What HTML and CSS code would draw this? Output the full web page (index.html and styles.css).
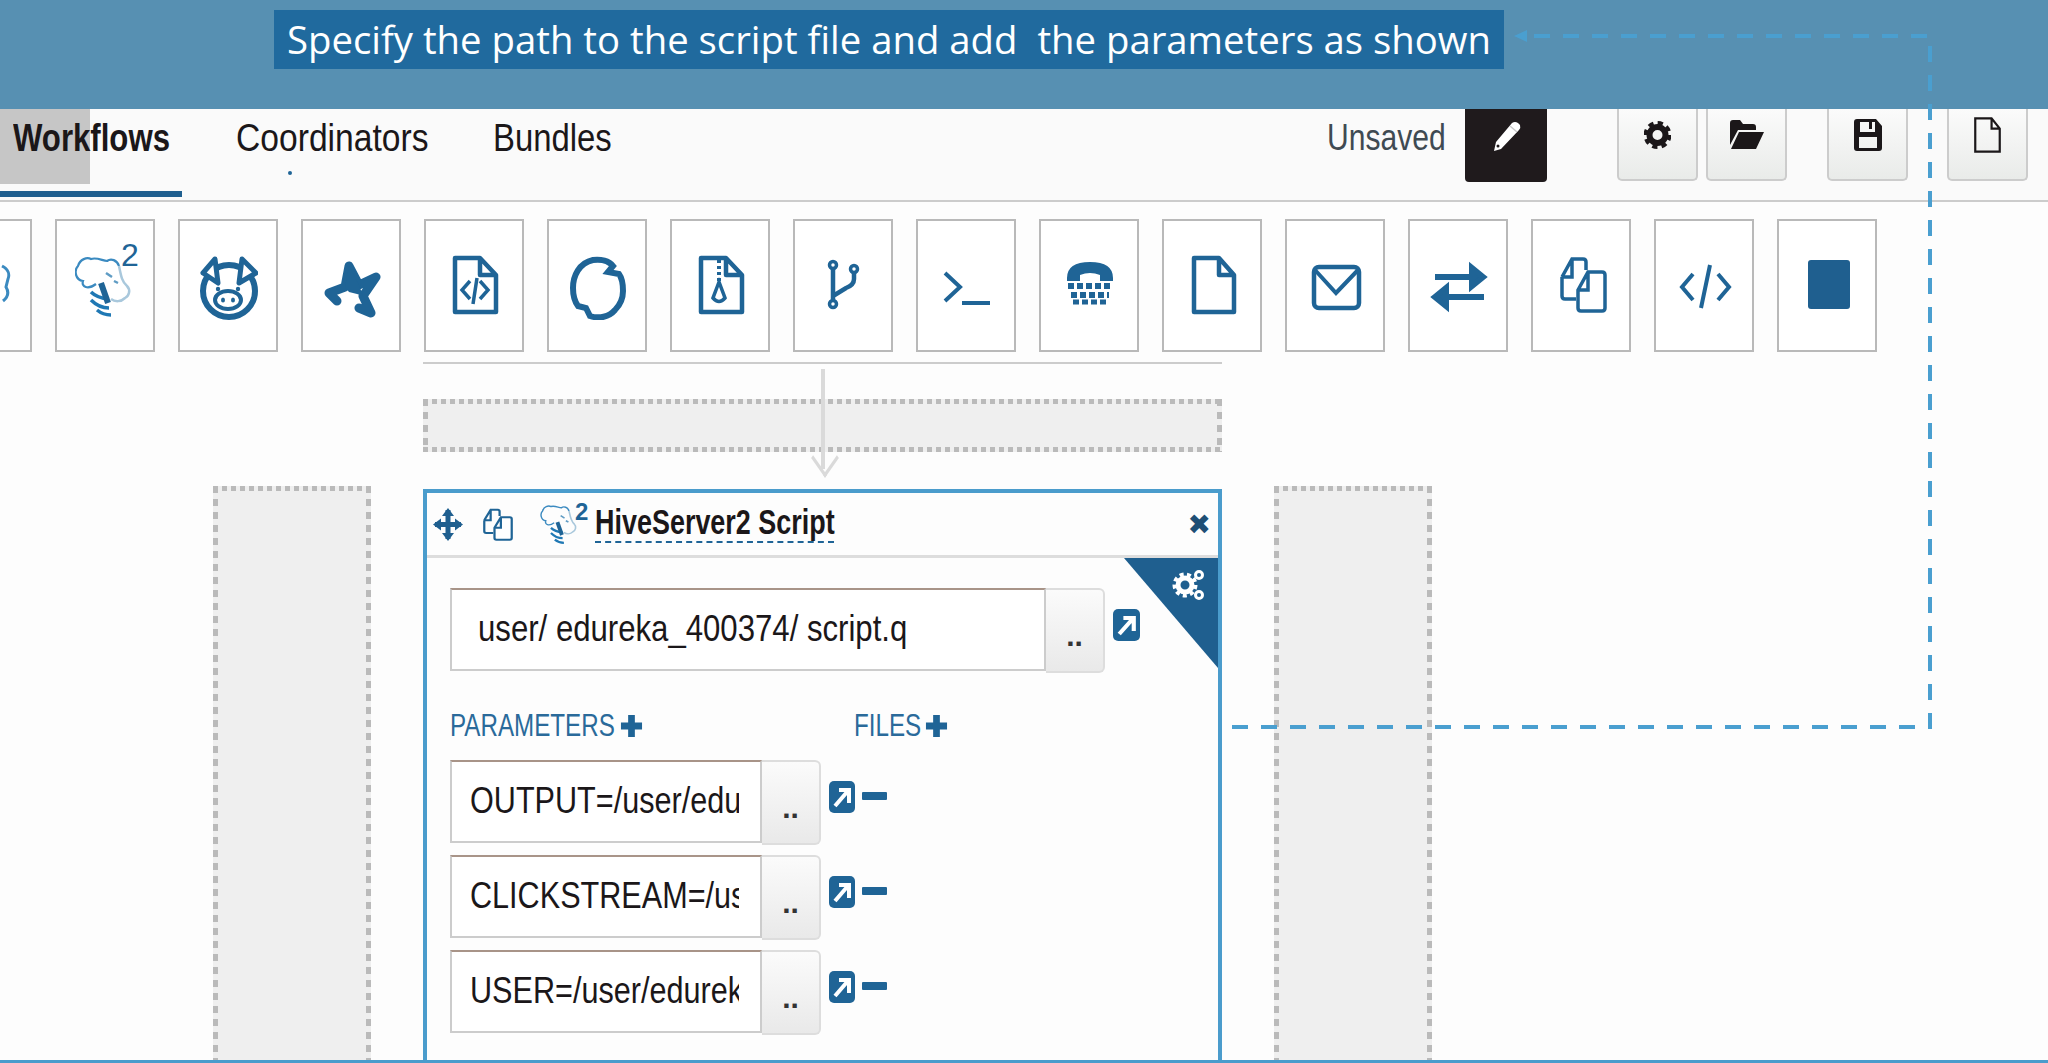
FILE: index.html
```html
<!DOCTYPE html>
<html lang="en">
<head>
    <meta charset="UTF-8">
    <title>Workflow Editor</title>
    <link rel="stylesheet" href="styles.css">
</head>
<body>
    <svg class="defs" width="0" height="0">
        <symbol id="hive" viewBox="0 0 60 68">
            <path d="M21 32C13 38 6 35 8 29 0 28-1 18 3 14 5 7 12 5 16 7 22 5 28 9 32 9 36 6 42 8 44 14" fill="none" stroke="#3b8ac0" stroke-width="2.200"/>
            <path d="M44 14C46 24 47 30 52 34 56 38 54 44 50 46 46 50 40 50 36 47" fill="none" stroke="#a9c8dc" stroke-width="2.500"/>
            <path d="M31 21l6 4M39 29l4 2" stroke="#5f9cc4" stroke-width="2.500"/>
            <path d="M16 40q6 6 18 7M16 48q8 8 18 8M22 58q6 5 14 5" fill="none" stroke="#1f78b4" stroke-width="3.500"/>
            <path d="M26 31l7 20" stroke="#1f6496" stroke-width="6"/>
        </symbol>
        <symbol id="copy" viewBox="0 0 47 57" preserveAspectRatio="none">
            <path d="M2 21L12 3h11q3 0 3 3v8M2 21v19q0 3 3 3h11M2 21h10V3" fill="none" stroke="#1f6496" stroke-width="3.500"/>
            <path d="M18 34L28 16h14q3 0 3 3v33q0 3-3 3H21q-3 0-3-3zM18 34h10V16" fill="#fff" stroke="#1f6496" stroke-width="3.500"/>
        </symbol>
        <symbol id="file" viewBox="0 0 43 56" preserveAspectRatio="none">
            <path d="M2 2h26l13 16v36H2zM28 2v16h13" fill="none" stroke="currentColor" stroke-width="3.500"/>
        </symbol>
        <symbol id="link" viewBox="0 0 26 32" preserveAspectRatio="none">
            <rect width="26" height="32" rx="5" fill="#1f6496"/>
            <path d="M6 25L18 11M10 9h10v13" fill="none" stroke="#fff" stroke-width="4"/>
        </symbol>
        <symbol id="plus" viewBox="0 0 24 24" preserveAspectRatio="none">
            <path d="M12 1v22M1 12h22" stroke="#1f6496" stroke-width="7"/>
        </symbol>
    </svg>

    <header class="banner">
        <p class="caption">Specify the path to the script file and add&nbsp; the parameters as shown</p>
    </header>

    <nav class="topbar">
        <div class="tabs">
            <a class="tab active"><span class="squeeze">Workflows</span></a>
            <a class="tab tab-coord"><span class="squeeze">Coordinators</span><i class="tab-dot"></i></a>
            <a class="tab"><span class="squeeze">Bundles</span></a>
        </div>
        <div class="actions">
            <span class="status"><span class="squeeze">Unsaved</span></span>
            <button class="btn-dark">
                <svg width="29" height="32" viewBox="0 0 29 32" preserveAspectRatio="none">
                    <path d="M2 31l2-9L20 3q3-2 6 0l2 2q1 3-1 5L9 29z" fill="#fff"/>
                    <path d="M18 6l7 6" stroke="#c9c9c9" stroke-width="1.500"/>
                    <circle cx="6" cy="26" r="1.500" fill="#1f1a1c"/>
                </svg>
            </button>
            <div class="btn-group">
                <button class="btn-light">
                    <svg width="27" height="32" viewBox="0 0 27 32" preserveAspectRatio="none">
                        <circle cx="13.500" cy="16" r="8" fill="none" stroke="#1b1719" stroke-width="6"/>
                        <circle cx="13.500" cy="16" r="11.500" fill="none" stroke="#1b1719" stroke-width="5" stroke-dasharray="5 4"/>
                    </svg>
                </button>
                <button class="btn-light">
                    <svg width="34" height="31" viewBox="0 0 34 31" preserveAspectRatio="none"><path d="M0 4q0-3 3-3h7l3 4h10q3 0 3 3v3H8L0 26zM9 13h25l-8 17H1z" fill="#1b1719"/></svg>
                </button>
            </div>
            <button class="btn-light">
                <svg width="28" height="32" viewBox="0 0 28 32" preserveAspectRatio="none"><path fill-rule="evenodd" d="M0 3q0-3 3-3h19l6 7v22q0 3-3 3H3q-3 0-3-3zM6 3v10h15V3h-3v7h-3V3zM5 18v11h18V18z" fill="#1b1719"/></svg>
            </button>
            <button class="btn-light btn-last">
                <svg class="ink" width="27" height="36"><use href="#file"/></svg>
            </button>
        </div>
    </nav>

    <section class="toolbox">
        <div class="tool">
            <svg class="icon" viewBox="0 0 60 68"><path d="M50 14c6 3 8 8 6 13l-2 8c3 5 2 10-3 14" fill="none" stroke="#3b8ac0" stroke-width="3"/></svg>
        </div>
        <div class="tool">
            <svg class="icon"><use href="#hive"/></svg>
            <span class="tool-sup">2</span>
        </div>
        <div class="tool">
            <svg class="icon" viewBox="0 0 60 68">
                <circle cx="31" cy="39" r="26" fill="none" stroke="#1f6496" stroke-width="6"/>
                <path d="M17 7L5 21l15 10zM44 7l14 14-17 10z" fill="#fff" stroke="#1f6496" stroke-width="5" stroke-linejoin="round"/>
                <ellipse cx="30" cy="48" rx="13" ry="9" fill="none" stroke="#1f6496" stroke-width="4"/>
                <ellipse cx="25" cy="48" rx="2" ry="2.500" fill="#1f6496"/>
                <ellipse cx="35" cy="48" rx="2" ry="2.500" fill="#1f6496"/>
                <circle cx="20" cy="37" r="2.200" fill="#1f6496"/>
                <circle cx="40" cy="37" r="2.200" fill="#1f6496"/>
            </svg>
        </div>
        <div class="tool">
            <svg class="icon" viewBox="0 0 60 68">
                <path d="M16 49L8 41 24 35 28 14 38 33 55 25 42 44 50 61 38 56" fill="none" stroke="#1f6496" stroke-width="9" stroke-linecap="round" stroke-linejoin="round"/>
                <path d="M24 35L28 14 38 33 42 44 36 42 28 40z" fill="#1f6496"/>
            </svg>
        </div>
        <div class="tool">
            <svg class="icon" viewBox="0 0 60 68">
                <path d="M11 6h25l16 17v37H11zM36 6v17h16" fill="none" stroke="#1f6496" stroke-width="4.500" stroke-linejoin="round"/>
                <path d="M26 29l-8 9 8 9M36 29l8 9-8 9M33 26l-4 26" fill="none" stroke="#1f6496" stroke-width="3.500"/>
            </svg>
        </div>
        <div class="tool">
            <svg class="icon" viewBox="0 0 60 68"><path d="M46 14C42 9 34 7 26 8 12 11 6 24 6 36 6 44 8 50 11 54L19 56 23 64C32 67 42 65 48 58 54 52 56 46 56 39 56 32 55 26 52 22L41 20z" fill="none" stroke="#1f6496" stroke-width="6"/></svg>
        </div>
        <div class="tool">
            <svg class="icon" viewBox="0 0 60 68">
                <path d="M11 6h25l16 17v37H11zM36 6v17h16" fill="none" stroke="#1f6496" stroke-width="4.500" stroke-linejoin="round"/>
                <path d="M29 8v22" stroke="#1f6496" stroke-width="4" stroke-dasharray="3 3"/>
                <path d="M29 30l-6 16q6 7 12 0z" fill="none" stroke="#1f6496" stroke-width="3.500"/>
            </svg>
        </div>
        <div class="tool">
            <svg class="icon" viewBox="0 0 60 68">
                <circle cx="20" cy="13" r="3.500" fill="none" stroke="#1f6496" stroke-width="3.500"/>
                <circle cx="41" cy="17" r="3.500" fill="none" stroke="#1f6496" stroke-width="3.500"/>
                <circle cx="20" cy="52" r="3.500" fill="none" stroke="#1f6496" stroke-width="3.500"/>
                <path d="M20 17v31M41 21v6q0 6-8 9l-13 8" fill="none" stroke="#1f6496" stroke-width="4.500"/>
            </svg>
        </div>
        <div class="tool">
            <svg class="icon" viewBox="0 0 60 68"><path d="M9 21l15 14L9 49M26 51h28" fill="none" stroke="#1f6496" stroke-width="4"/></svg>
        </div>
        <div class="tool">
            <svg class="icon" viewBox="0 0 60 68">
                <path d="M8 26q0-16 23-16t23 16v3H41v-6q-10-4-20 0v6H8z" fill="#1f6496"/>
                <path d="M9 34h44M12 43h38" stroke="#1f6496" stroke-width="6" stroke-dasharray="6 3"/>
                <path d="M14 50h34" stroke="#1f6496" stroke-width="5" stroke-dasharray="6 3"/>
            </svg>
        </div>
        <div class="tool">
            <svg class="icon" viewBox="0 0 60 68"><path d="M12 6h25l15 17v37H12zM37 6v17h15" fill="none" stroke="#1f6496" stroke-width="4.500" stroke-linejoin="round"/></svg>
        </div>
        <div class="tool">
            <svg class="icon" viewBox="0 0 60 68"><rect x="9" y="15" width="45" height="41" rx="5" fill="none" stroke="#1f6496" stroke-width="4.500"/><path d="M10 18l21 23 22-23" fill="none" stroke="#1f6496" stroke-width="4"/></svg>
        </div>
        <div class="tool">
            <svg class="icon" viewBox="0 0 60 68">
                <path d="M7 25h38M55 25L44 16v18zM56 45H18M7 45l11-9v18z" fill="#1f6496" stroke="#1f6496" stroke-width="6"/>
            </svg>
        </div>
        <div class="tool">
            <svg class="icon"><use href="#copy" x="9" y="4" width="47" height="57"/></svg>
        </div>
        <div class="tool">
            <svg class="icon" viewBox="0 0 60 68"><path d="M19 22L8 35l11 13M44 22l11 13-11 13M36 13L27 56" fill="none" stroke="#1f6496" stroke-width="4"/></svg>
        </div>
        <div class="tool">
            <svg class="icon" viewBox="0 0 60 68"><rect x="11" y="8" width="42" height="49" rx="3" fill="#1f5f8f"/></svg>
        </div>
    </section>

    <main class="stage">
        <div class="slot side"></div>
        <div class="center">
            <div class="rule"></div>
            <div class="slot row-slot"></div>
            <div class="drop-arrow"></div>

            <article class="action-card">
                <div class="card-head">
                    <svg class="move" width="30" height="33" viewBox="0 0 30 33" preserveAspectRatio="none">
                        <path d="M15 2v29M2 16.500h26" stroke="#1f5f8f" stroke-width="5"/>
                        <path d="M15 0l6 8H9zM15 33l6-8H9zM0 16.500l8-6v12zM30 16.500l-8-6v12z" fill="#1f5f8f"/>
                    </svg>
                    <svg class="copy-small" width="30" height="33"><use href="#copy"/></svg>
                    <span class="hive-small">
                        <svg width="40" height="44"><use href="#hive"/></svg>
                        <span class="hive-sup">2</span>
                    </span>
                    <span class="card-title"><span class="squeeze">HiveServer2 Script</span></span>
                    <span class="card-close">&#10006;</span>
                </div>

                <div class="card-body">
                    <div class="corner">
                        <svg width="34" height="33" viewBox="0 0 34 33">
                            <circle cx="13" cy="17" r="7" fill="none" stroke="#fff" stroke-width="5"/>
                            <circle cx="13" cy="17" r="10.500" fill="none" stroke="#fff" stroke-width="4" stroke-dasharray="4 3.300"/>
                            <circle cx="27" cy="7" r="3.500" fill="none" stroke="#fff" stroke-width="3"/>
                            <circle cx="27" cy="27" r="3.500" fill="none" stroke="#fff" stroke-width="3"/>
                        </svg>
                    </div>

                    <div class="path-row">
                        <div class="field field-path"><div class="field-text"><span class="squeeze">user/ edureka_400374/ script.q</span></div></div>
                        <button class="browse">..</button>
                        <svg class="link" width="27" height="32"><use href="#link"/></svg>
                    </div>

                    <div class="labels">
                        <span class="label label-params"><span class="label-text"><span class="squeeze">PARAMETERS</span></span><svg width="23" height="24"><use href="#plus"/></svg></span>
                        <span class="label"><span class="label-text label-files"><span class="squeeze">FILES</span></span><svg width="23" height="24"><use href="#plus"/></svg></span>
                    </div>

                    <div class="param-row">
                        <div class="field"><div class="field-text"><span class="squeeze">OUTPUT=/user/edu</span></div></div>
                        <button class="browse">..</button>
                        <svg class="link" width="26" height="32"><use href="#link"/></svg>
                        <span class="minus"></span>
                    </div>
                    <div class="param-row">
                        <div class="field"><div class="field-text"><span class="squeeze">CLICKSTREAM=/use</span></div></div>
                        <button class="browse">..</button>
                        <svg class="link" width="26" height="32"><use href="#link"/></svg>
                        <span class="minus"></span>
                    </div>
                    <div class="param-row">
                        <div class="field"><div class="field-text"><span class="squeeze">USER=/user/edurek</span></div></div>
                        <button class="browse">..</button>
                        <svg class="link" width="26" height="32"><use href="#link"/></svg>
                        <span class="minus"></span>
                    </div>
                </div>
            </article>
        </div>
        <div class="slot side"></div>
    </main>

    <!-- callout line from the card up to the caption -->
    <svg class="callout" width="2048" height="1063">
        <path d="M1232 727H1930V36H1530" fill="none" stroke="#4a9fd0" stroke-width="4" stroke-dasharray="16 13"/>
        <path d="M1514 36l13-6v12z" fill="#4a9fd0"/>
    </svg>
</body>
</html>
```

FILE: styles.css
```css
* {
    box-sizing: border-box;
}

html, body {
    margin: 0;
    height: 1063px;
    overflow: hidden;
}

body {
    position: relative;
    display: flex;
    flex-direction: column;
    font-family: "Liberation Sans", sans-serif;
    background: #fdfdfd;
    color: #1b1719;
}

.defs {
    position: absolute;
}

/* the screenshot is squashed sideways, so text is narrowed to follow it */
.squeeze {
    display: inline-block;
    white-space: nowrap;
    transform: scaleX(.865);
    transform-origin: 0 50%;
}

.banner {
    height: 109px;
    flex: none;
    padding: 10px 0 0 274px;
    background: #5790b2;
}

.caption {
    width: 1230px;
    height: 59px;
    margin: 0;
    padding-left: 13px;
    font-family: "Open Sans", sans-serif;
    font-size: 38.300px;
    line-height: 59px;
    white-space: nowrap;
    color: #fff;
    background: #206a9e;
}

.topbar {
    height: 93px;
    flex: none;
    display: flex;
    justify-content: space-between;
    background: #fafafa;
    border-bottom: 2px solid #ccc;
}

.tabs {
    display: flex;
    isolation: isolate;
}

.tab {
    position: relative;
    width: 130px;
    height: 88px;
    font-size: 38px;
    line-height: 58px;
}

.tab-coord {
    width: 257px;
    margin-left: 54px;
}

.tab-coord .squeeze {
    transform: scaleX(.885);
}

.tab-dot {
    position: absolute;
    left: 52px;
    top: 62px;
    width: 4px;
    height: 4px;
    border-radius: 50%;
    background: #1f6496;
}

.tab.active {
    width: 182px;
    padding-left: 13px;
    font-weight: bold;
    border-bottom: 6px solid #1f5f8f;
}

.tab.active .squeeze {
    transform: scaleX(.82);
}

.tab.active::before {
    content: "";
    position: absolute;
    z-index: -1;
    left: 0;
    top: 0;
    width: 90px;
    height: 75px;
    background: #c6c6c6;
}

.actions {
    display: flex;
    align-items: flex-start;
    padding-right: 20px;
}

.status {
    width: 118px;
    margin-right: 20px;
    font-size: 36px;
    line-height: 58px;
    color: #3f4a52;
}

.status .squeeze {
    transform: scaleX(.835);
}

button {
    font: inherit;
    padding: 0;
}

.btn-dark {
    width: 82px;
    height: 73px;
    margin-right: 70px;
    padding: 11px 0 0;
    display: flex;
    justify-content: center;
    align-items: flex-start;
    border: none;
    border-radius: 0 0 4px 4px;
    background: #1f1a1c;
}

.btn-group {
    display: flex;
    gap: 8px;
    margin-right: 40px;
}

.btn-light {
    width: 81px;
    height: 72px;
    padding: 10px 0 0;
    display: flex;
    justify-content: center;
    align-items: flex-start;
    border: 2px solid #ccc;
    border-top: none;
    border-radius: 0 0 5px 5px;
    background: linear-gradient(#fbfbfb, #e9ebe9);
}

.btn-light + .btn-last {
    margin-left: 39px;
    padding-top: 8px;
}

.ink {
    color: #1b1719;
}

.toolbox {
    flex: none;
    display: flex;
    gap: 23px;
    margin: 17px 0 0 -68px;
}

.tool {
    position: relative;
    width: 100px;
    height: 133px;
    flex: none;
    display: flex;
    align-items: center;
    justify-content: center;
    background: #fff;
    border: 2px solid #b9b9b9;
}

.icon {
    width: 60px;
    height: 68px;
}

.tool-sup {
    position: absolute;
    left: 64px;
    top: 16px;
    font-size: 32px;
    line-height: 36px;
    color: #1f6496;
}

.stage {
    flex: 1;
    min-height: 0;
    display: grid;
    grid-template-columns: 158px 799px 158px;
    column-gap: 52px;
    padding-left: 213px;
    border-bottom: 3px solid #4a9ccc;
}

.slot {
    background:
        repeating-linear-gradient(90deg, #bababa 0 5px, transparent 5px 9px) top / 100% 5px no-repeat,
        repeating-linear-gradient(90deg, #bababa 0 5px, transparent 5px 9px) bottom / 100% 5px no-repeat,
        repeating-linear-gradient(180deg, #bababa 0 7px, transparent 7px 13px) left / 5px 100% no-repeat,
        repeating-linear-gradient(180deg, #bababa 0 7px, transparent 7px 13px) right / 5px 100% no-repeat,
        #efefef;
}

.side {
    margin-top: 134px;
    background-size: 100% 5px, 0 0, 5px 100%, 5px 100%;
}

.center {
    position: relative;
    display: flex;
    flex-direction: column;
    padding-top: 10px;
}

.rule {
    height: 2px;
    background: #ccc;
}

.row-slot {
    height: 53px;
    margin-top: 35px;
}

.drop-arrow {
    position: absolute;
    left: 398px;
    top: 17px;
    width: 4px;
    height: 100px;
    background: #dadada;
}

.drop-arrow::after {
    content: "";
    position: absolute;
    left: -10px;
    bottom: -3px;
    width: 24px;
    height: 24px;
    border-right: 4px solid #dadada;
    border-bottom: 4px solid #dadada;
    transform: scaleX(.7) rotate(45deg);
}

.action-card {
    flex: 1;
    margin-top: 37px;
    background: #fdfdfd;
    border: 4px solid #4a9ccc;
    border-bottom: none;
}

.card-head {
    height: 65px;
    display: flex;
    align-items: center;
    padding: 0 7px 0 6px;
    border-bottom: 3px solid #ddd;
}

.copy-small {
    margin-left: 20px;
}

.hive-small {
    position: relative;
    display: flex;
    margin-left: 27px;
}

.hive-sup {
    position: absolute;
    left: 35px;
    top: -4px;
    font-size: 24px;
    font-weight: bold;
    color: #1f6496;
}

.card-title {
    width: 239px;
    margin: 0 0 5px 15px;
    padding-top: 3px;
    font-size: 35px;
    line-height: 38px;
    font-weight: bold;
    border-bottom: 2px dashed #1f6496;
}

.card-title .squeeze {
    transform: scaleX(.77);
}

.card-close {
    margin-left: auto;
    font-family: "DejaVu Sans", sans-serif;
    font-size: 28px;
    color: #1f4f75;
}

.card-body {
    position: relative;
    padding: 30px 0 0 23px;
}

.corner {
    position: absolute;
    right: 0;
    top: 0;
    width: 94px;
    height: 110px;
    padding: 10px 0 0 48px;
    background: #1f5f8f;
    clip-path: polygon(0 0, 100% 0, 100% 100%);
}

.path-row, .param-row {
    display: flex;
    align-items: flex-start;
}

.field {
    width: 596px;
    height: 83px;
    flex: none;
    display: flex;
    align-items: center;
    padding: 0 21px 2px 26px;
    font-size: 36px;
    background: #fff;
    border: 2px solid #ccc;
    border-top-color: #a89488;
}

.field-text {
    flex: 1;
    min-width: 0;
    overflow: hidden;
    line-height: 44px;
}

.param-row .squeeze {
    transform: scaleX(.85);
}

.browse {
    width: 59px;
    height: 85px;
    padding-top: 10px;
    flex: none;
    font-weight: bold;
    font-size: 30px;
    color: #333;
    background: linear-gradient(#fbfbfb, #e9e9e9);
    border: 2px solid #ddd;
    border-left: none;
    border-radius: 0 6px 6px 0;
}

.link {
    margin: 21px 0 0 8px;
    flex: none;
}

.labels {
    display: flex;
    margin-top: 40px;
    height: 47px;
    align-items: flex-start;
}

.label {
    display: flex;
    align-items: center;
    gap: 5px;
    font-size: 31px;
    line-height: 26px;
    color: #2a6a9a;
}

.label .squeeze {
    transform: scaleX(.78);
}

.label-params {
    width: 404px;
}

.label-text {
    width: 165px;
}

.label-text.label-files {
    width: 66px;
}

.param-row {
    height: 95px;
}

.param-row .field {
    width: 312px;
    padding-left: 18px;
}

.minus {
    width: 25px;
    height: 8px;
    margin: 32px 0 0 7px;
    background: #1f6496;
    border-radius: 1px;
}

.callout {
    position: absolute;
    left: 0;
    top: 0;
    pointer-events: none;
}
```
